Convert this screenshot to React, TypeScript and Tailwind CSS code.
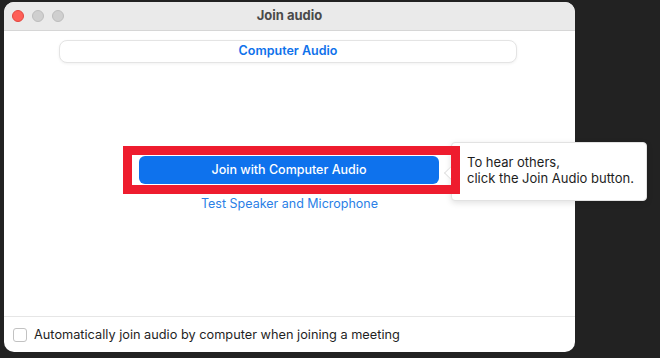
export default function App() {
  return (
    <div className="relative h-[358px] w-[660px] bg-[#222222] pl-[4px] pt-[2px] font-['Inter','Liberation_Sans',sans-serif] antialiased">
      <div className="flex h-[350px] w-[571px] flex-col rounded-[10px] bg-white">
        {/* title bar */}
        <div className="relative flex h-[29px] shrink-0 items-center justify-center rounded-t-[10px] border-b border-[#d6d6d6] bg-[#eaeaea]">
          <div className="absolute left-[8px] top-[8px] flex gap-[8px]">
            <span className="h-[12px] w-[12px] rounded-full border border-[#e2463f] bg-[#fe5f57]" />
            <span className="h-[12px] w-[12px] rounded-full border border-[#bdbdbd] bg-[#cfcfcf]" />
            <span className="h-[12px] w-[12px] rounded-full border border-[#bdbdbd] bg-[#cfcfcf]" />
          </div>
          <span className="text-[13px] font-bold text-[#4a4a4a]">Join audio</span>
        </div>

        {/* body */}
        <div className="flex flex-1 flex-col">
          <div className="ml-[55px] mt-[9px] flex h-[23px] w-[458px] items-center justify-center rounded-[8px] border border-[#e4e4e4] bg-white shadow-[0_1px_3px_rgba(0,0,0,0.06)]">
            <span className="text-[12.5px] font-semibold text-[#0e71eb]">Computer Audio</span>
          </div>

          <div className="relative z-20 ml-[119px] mt-[83px] h-[48px] w-[337px] border-[9px] border-[#ee1c2e]">
            <button className="ml-[7px] mt-[1px] flex h-[28px] w-[300px] items-center justify-center rounded-[6px] bg-[#0e72ed] text-[12.5px] font-medium text-white">
              Join with Computer Audio
            </button>
          </div>

          <div className="mt-[2px] text-center text-[12.5px] leading-[16px] text-[#2b7fe6]">Test Speaker and Microphone</div>
        </div>

        {/* footer */}
        <div className="flex h-[36px] shrink-0 items-center gap-[7px] border-t border-[#e6e6e6] pl-[9px]">
          <span className="h-[14px] w-[14px] rounded-[3px] border border-[#c2c2c2] bg-white" />
          <span className="text-[12.75px] text-[#1f1f1f]">Automatically join audio by computer when joining a meeting</span>
        </div>
      </div>

      {/* tooltip */}
      <div className="absolute left-[451px] top-[142px] z-10 h-[59px] w-[196px] rounded-[4px] border border-[#e2e2e2] bg-white pl-[15px] pt-[11px] text-[13px] leading-[16px] text-[#1d1d1d] shadow-[0_2px_6px_rgba(0,0,0,0.12)]">
        <div className="absolute left-[-6px] top-[25px] h-[10px] w-[10px] rotate-45 border-b border-l border-[#e2e2e2] bg-white" />
        <div>To hear others,</div>
        <div>click the Join Audio button.</div>
      </div>
    </div>
  );
}
